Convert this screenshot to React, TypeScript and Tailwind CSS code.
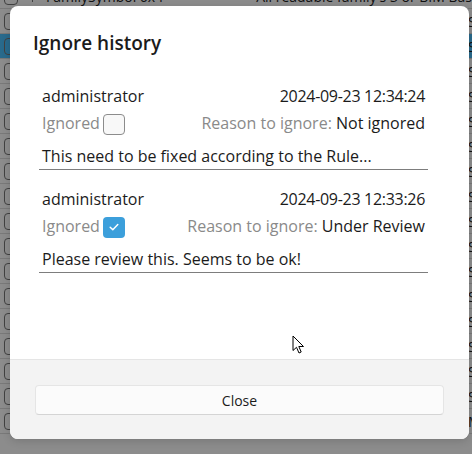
import React from "react";

const font = { fontFamily: '"Segoe UI", "Open Sans", "Noto Sans", sans-serif' };

function Check() {
  return (
    <div className="w-[40px] shrink-0 flex items-center pl-[4px] gap-[14px]">
      <div className="w-[14px] h-[17px] rounded-[4px] border border-[#777]" />
      <div className="w-px h-[12px] bg-[#777]" />
    </div>
  );
}

function BgRow({ selected }: { selected?: boolean }) {
  return (
    <div
      className={
        "flex items-center h-[25px] shrink-0 border-b border-[#dcdcdc] text-[14px] text-[#222] " +
        (selected ? "bg-[#4cc2ff]" : "bg-white")
      }
    >
      <Check />
      <div className="flex-1" />
      <div className="w-[4px] overflow-hidden whitespace-nowrap">Sy</div>
    </div>
  );
}

function Entry({
  date,
  checked,
  reason,
  text,
}: {
  date: string;
  checked: boolean;
  reason: string;
  text: string;
}) {
  return (
    <div className="flex flex-col mb-[17px]">
      <div className="flex justify-between h-[24px] leading-[24px] px-[3px] text-[#1b1b1b]">
        <span>administrator</span>
        <span className="tracking-[-0.3px]">{date}</span>
      </div>
      <div className="flex justify-between items-center h-[30px] mt-px px-[3px]">
        <div className="flex items-center gap-[3px]">
          <span className="text-[#8a8a8a] leading-[24px] mb-[2px]">Ignored</span>
          {checked ? (
            <div className="w-[22px] h-[21px] rounded-[4px] bg-[#3c9fdb] flex items-center justify-center">
              <svg width="12" height="10" viewBox="0 0 12 10">
                <path d="M2.2 5.3 L4.8 7.8 L9.8 2.6" fill="none" stroke="white" strokeWidth="1.5" strokeLinecap="round" strokeLinejoin="round" />
              </svg>
            </div>
          ) : (
            <div className="w-[22px] h-[21px] rounded-[4px] bg-[#f8f8f8] border border-[#8c8c8c]" />
          )}
        </div>
        <div className="leading-[24px] mb-[2px]">
          <span className="text-[#8a8a8a]">Reason to ignore: </span>
          <span className="text-[#1b1b1b]">{reason}</span>
        </div>
      </div>
      <div className="h-[31px] pt-[7px] leading-[20px] px-[3px] text-[#1b1b1b] border-b border-[#7d7d7d] whitespace-nowrap">
        {text}
      </div>
    </div>
  );
}

export default function App() {
  return (
    <div className="relative w-[472px] h-[454px] overflow-hidden bg-white" style={font}>
      <div className="flex flex-col mt-[-16px]">
        <div className="flex items-center h-[25px] shrink-0 border-b border-[#dcdcdc] text-[14px] text-[#222] bg-white whitespace-nowrap">
          <Check />
          <span className="pl-[6px] w-[240px]">FamilySymbol 6x4</span>
          <span>All readable family's 3 or BIM Bas</span>
        </div>
        <BgRow />
        <BgRow selected />
        {Array.from({ length: 14 }, (_, i) => (
          <BgRow key={i} />
        ))}
        <div className="flex items-center h-[25px] shrink-0 border-b border-[#dcdcdc] text-[14px] text-[#222] bg-white whitespace-nowrap">
          <Check />
          <span className="pl-[6px]">FamilySymbol, Interior - 79mm Partiti</span>
          <span className="pl-[10px]">Assembly Code is 4 cir</span>
          <span className="pl-[12px]">BIM Bas</span>
        </div>
      </div>
      <div className="absolute inset-0 bg-black/45" />

      <div className="absolute left-[10px] top-[6px] w-[459px] h-[433px] rounded-[8px] bg-white flex flex-col overflow-hidden shadow-[0_2px_8px_rgba(0,0,0,0.15)]">
        <div className="flex-1 flex flex-col">
          <div className="pt-[23px] pl-[23px] text-[19px] leading-[28px] font-semibold text-[#1b1b1b]">Ignore history</div>
          <div className="ml-[29px] w-[389px] mt-[27px] text-[16px]">
            <Entry
              date="2024-09-23 12:34:24"
              checked={false}
              reason="Not ignored"
              text="This need to be fixed according to the Rule..."
            />
            <Entry
              date="2024-09-23 12:33:26"
              checked={true}
              reason="Under Review"
              text="Please review this. Seems to be ok!"
            />
          </div>
        </div>
        <div className="h-[80px] shrink-0 bg-[#f3f3f3] border-t border-[#e5e5e5] flex items-start pt-[25px] px-[25px]">
          <button className="w-full h-[30px] rounded-[4px] bg-[#fbfbfb] border border-[#e5e5e5] border-b-[#d4d4d4] text-[14px] text-[#1b1b1b]">
            Close
          </button>
        </div>
      </div>

      <svg className="absolute left-[292px] top-[335px]" width="13" height="20" viewBox="0 0 13 20">
        <path d="M1 1 L1 15.5 L4.5 12.3 L7 18 L9.2 17 L6.8 11.5 L11.5 11.5 Z" fill="white" stroke="black" strokeWidth="1" strokeLinejoin="round" />
      </svg>
    </div>
  );
}
